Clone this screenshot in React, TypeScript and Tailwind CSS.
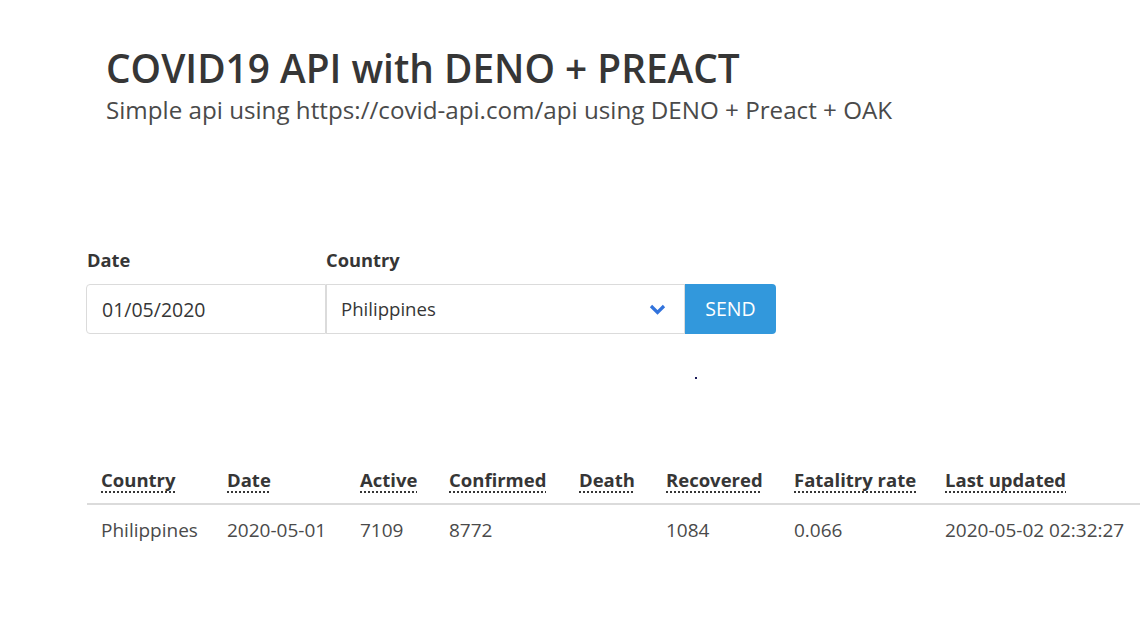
import React from "react";

const headers = [
  { label: "Country", w: "w-[126px]" },
  { label: "Date", w: "w-[133px]" },
  { label: "Active", w: "w-[89px]" },
  { label: "Confirmed", w: "w-[130px]" },
  { label: "Death", w: "w-[87px]" },
  { label: "Recovered", w: "w-[128px]" },
  { label: "Fatalitry rate", w: "w-[151px]" },
  { label: "Last updated", w: "w-[209px]" },
];

const row = ["Philippines", "2020-05-01", "7109", "8772", "", "1084", "0.066", "2020-05-02 02:32:27"];

export default function App() {
  return (
    <div className="min-h-[643px] w-[1140px] overflow-hidden bg-white font-['Open_Sans',sans-serif] text-[#4a4a4a]">
      <section className="pl-[106px] pt-[44px]">
        <h1 className="text-[38.8px] font-semibold leading-[48px] text-[#363636]">COVID19 API with DENO + PREACT</h1>
        <h2 className="mt-[3px] text-[24.2px] leading-[30px] text-[#4a4a4a]">
          Simple api using https://covid-api.com/api using DENO + Preact + OAK
        </h2>
      </section>

      <form className="mt-[123px] pl-[86px]" onSubmit={(e) => e.preventDefault()}>
        <div className="flex items-end">
          <div className="flex w-[240px] flex-col">
            <label className="mb-[12px] pl-[1px] text-[18.3px] font-bold leading-[24px] text-[#363636]">Date</label>
            <input
              readOnly
              value="01/05/2020"
              className="h-[50px] w-[240px] rounded-l-[4px] border border-[#dbdbdb] px-[15px] text-[19.5px] leading-[24px] text-[#363636] outline-none"
            />
          </div>
          <div className="flex flex-col">
            <label className="mb-[12px] text-[18.3px] font-bold leading-[24px] text-[#363636]">Country</label>
            <div className="flex">
              <div className="relative flex h-[50px] w-[359px] items-center border border-[#dbdbdb] px-[14px] text-[18.6px] leading-[24px] text-[#363636]">
                Philippines
                <svg
                  className="absolute right-[18px] top-[19px]"
                  width="17"
                  height="11"
                  viewBox="0 0 17 11"
                  fill="none"
                  stroke="#3273dc"
                  strokeWidth="3.2"
                >
                  <path d="M2 2l6.5 6.5L15 2" />
                </svg>
              </div>
              <button
                type="submit"
                className="h-[50px] w-[91px] rounded-r-[4px] bg-[#3298dc] text-[19.5px] leading-[24px] text-white"
              >
                SEND
              </button>
            </div>
          </div>
        </div>
        <div className="ml-[609px] mt-[43px] h-[2px] w-[2px] bg-[#1a1a5a]" />
      </form>

      <table className="ml-[87px] mt-[78px] w-[1053px] table-fixed border-collapse">
        <thead>
          <tr>
            {headers.map((h) => (
              <th
                key={h.label}
                className={`${h.w} border-b-2 border-[#dbdbdb] px-[14px] pb-[10px] pt-[9px] text-left text-[18.5px] font-bold leading-[27px] text-[#363636]`}
              >
                <abbr title={h.label} className="underline decoration-dotted decoration-[1.5px] underline-offset-[4px]">
                  {h.label}
                </abbr>
              </th>
            ))}
          </tr>
        </thead>
        <tbody>
          <tr>
            {row.map((c, i) => (
              <td key={i} className="whitespace-nowrap px-[14px] py-[12px] text-left text-[19px] leading-[27px]">
                {c}
              </td>
            ))}
          </tr>
        </tbody>
      </table>
    </div>
  );
}
